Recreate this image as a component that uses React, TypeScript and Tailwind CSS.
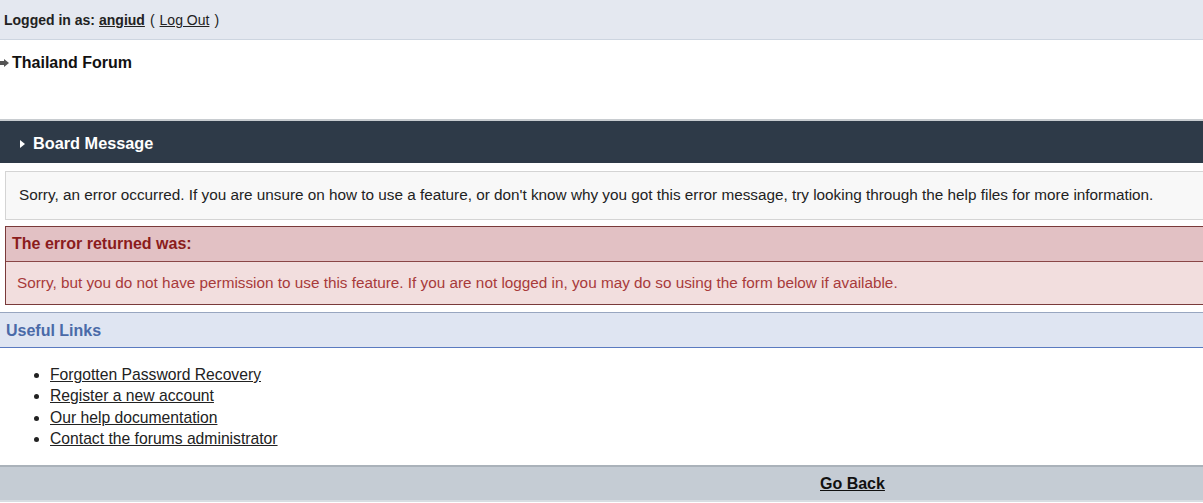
const links = [
  "Forgotten Password Recovery",
  "Register a new account",
  "Our help documentation",
  "Contact the forums administrator",
];

export default function App() {
  return (
    <div className="h-[503px] w-[1203px] overflow-hidden bg-white text-[#222] [font-family:'Liberation_Sans',Arial,sans-serif]">
      <div className="flex h-[40px] items-center border-b border-[#cdd5e0] bg-[#e4e8f0] px-[4px] pt-[1px] text-[14px]">
        <span className="font-bold">Logged in as:</span>
        <a href="#" className="ml-[4px] font-bold underline">angiud</a>
        <span className="ml-[5px]">(</span>
        <a href="#" className="ml-[5px] underline">Log Out</a>
        <span className="ml-[5px]">)</span>
      </div>

      <div className="h-[81px] border-b-2 border-[#c8ccd0]">
        <div className="flex items-center pt-[11px]">
          <svg width="9" height="8" viewBox="0 0 9 8" className="mr-[3px]">
            <path d="M0 2h4V0l5 4-5 4V6H0z" fill="#555" />
          </svg>
          <h1 className="text-[16px] font-bold text-[#111]">Thailand Forum</h1>
        </div>
      </div>

      <div className="flex h-[42px] items-center bg-[#2e3a48] pl-[20px] pt-[3px] text-white">
        <svg width="5" height="8" viewBox="0 0 5 8" className="mr-[8px]">
          <path d="M0 0l5 4-5 4z" fill="#fff" />
        </svg>
        <h2 className="text-[16.3px] font-bold">Board Message</h2>
      </div>

      <div className="pl-[5px] pt-[8px]">
        <div className="flex h-[49px] items-center border border-r-0 border-[#d4d4d4] bg-[#f8f8f8] pl-[13px] text-[15.3px] text-[#222]">
          Sorry, an error occurred. If you are unsure on how to use a feature, or don't know why you got this error message, try looking through the help files for more information.
        </div>

        <div className="mt-[6px] border border-r-0 border-[#7a3a3a]">
          <div className="flex h-[35px] items-center border-b border-[#8a4646] bg-[#e2c1c4] pl-[6px] text-[16px] font-bold text-[#8b1c1c]">
            The error returned was:
          </div>
          <div className="flex h-[42px] items-center bg-[#f2dede] pl-[11px] text-[15.3px] text-[#a83a3a]">
            Sorry, but you do not have permission to use this feature. If you are not logged in, you may do so using the form below if available.
          </div>
        </div>
      </div>

      <div className="mt-[7px] flex h-[36px] items-center border-y border-t-[#98a6c0] border-b-[#5a7ac0] bg-[#dfe5f2] pl-[6px] pt-[1px] text-[16px] font-bold text-[#4a6aa8]">
        Useful Links
      </div>

      <ul className="list-disc pl-[50px] pt-[16px] text-[15.7px] leading-[21.3px] text-[#222]">
        {links.map((l) => (
          <li key={l}>
            <a href="#" className="underline">{l}</a>
          </li>
        ))}
      </ul>

      <div className="mt-[16px] flex h-[37px] items-center border-y-2 border-t-[#aab2ba] border-b-[#d8dde2] bg-[#c5ccd4] pl-[820px]">
        <a href="#" className="text-[16px] font-bold text-[#111] underline">Go Back</a>
      </div>
    </div>
  );
}
